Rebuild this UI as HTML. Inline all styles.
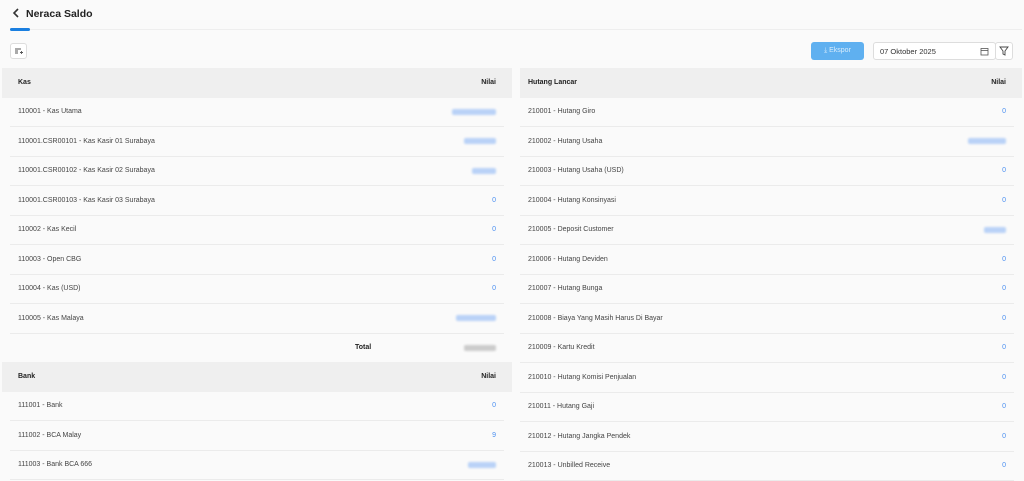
<!DOCTYPE html>
<html><head><style>
*{margin:0;padding:0;box-sizing:border-box}
body{width:1024px;height:481px;overflow:hidden;background:#fafafa;font-family:"Liberation Sans",sans-serif;font-size:8px;color:#333;position:relative}
.abs{position:absolute}
.tbl{position:absolute;top:68px}
.hd{height:29.5px;background:#efefef;display:flex;align-items:center;justify-content:space-between;padding:0 16px;font-weight:bold;font-size:7px;color:#222}
.row{height:29.5px;display:flex;align-items:center;justify-content:space-between;margin:0 8px;padding:0 8px;border-bottom:1px solid #ebebeb;font-size:7px;color:#444}
.r .hd{padding-left:8px}
.r .row{margin-left:0}
.v{color:#4a8ff0}
.b{display:inline-block;height:6px;background:#b9d2f7;border-radius:2px;filter:blur(1px)}
.g{background:#ccc}
</style></head><body>
<div class="abs" style="left:12px;top:8px;font-size:10.5px;font-weight:bold;color:#222">
<svg width="9" height="10" viewBox="0 0 9 10" style="vertical-align:-1px;margin-right:5px"><path d="M6 1L2 5l4 4" stroke="#333" stroke-width="1.6" fill="none"/></svg>Neraca Saldo</div>
<div class="abs" style="left:10px;top:29px;width:1012px;height:1px;background:#eee"></div>
<div class="abs" style="left:10px;top:28px;width:20px;height:3px;border-radius:2px;background:#1a7fe0"></div>
<div class="abs" style="left:10px;top:43px;width:17px;height:16px;border:1px solid #ddd;border-radius:3px;background:#fff">
<svg width="15" height="14" viewBox="0 0 15 14"><path d="M4 5h6M4 7h3M4 9h3M9 8.5h3M10.5 7v3" stroke="#555" stroke-width="0.9" fill="none"/></svg></div>
<div class="abs" style="left:811px;top:42px;width:53px;height:18px;background:#5fb0f0;border-radius:3px;color:#d8ecfc;font-size:7px;display:flex;align-items:center;justify-content:center">⤓&nbsp;Ekspor</div>
<div class="abs" style="left:873px;top:42px;width:123px;height:18px;border:1px solid #ddd;border-radius:3px;background:#fff;font-size:7.5px;padding:4px 6px;color:#333">07 Oktober 2025
<svg class="abs" style="right:6px;top:4px" width="9" height="9" viewBox="0 0 9 9"><rect x="1" y="1.5" width="7" height="6.5" stroke="#555" fill="none" stroke-width="0.8"/><path d="M1 3.5h7" stroke="#555" stroke-width="0.8"/></svg></div>
<div class="abs" style="left:995px;top:42px;width:18px;height:18px;border:1px solid #ddd;border-radius:3px;background:#fff">
<svg width="16" height="16" viewBox="0 0 16 16"><path d="M4 4h8l-3 4v4l-2-1V8z" stroke="#444" fill="none" stroke-width="0.9"/></svg></div>

<div class="tbl" style="left:2px;width:510px">
<div class="hd"><span>Kas</span><span>Nilai</span></div>
<div class="row"><span>110001 - Kas Utama</span><span class="b" style="width:44px"></span></div>
<div class="row"><span>110001.CSR00101 - Kas Kasir 01 Surabaya</span><span class="b" style="width:32px"></span></div>
<div class="row"><span>110001.CSR00102 - Kas Kasir 02 Surabaya</span><span class="b" style="width:24px"></span></div>
<div class="row"><span>110001.CSR00103 - Kas Kasir 03 Surabaya</span><span class="v">0</span></div>
<div class="row"><span>110002 - Kas Kecil</span><span class="v">0</span></div>
<div class="row"><span>110003 - Open CBG</span><span class="v">0</span></div>
<div class="row"><span>110004 - Kas (USD)</span><span class="v">0</span></div>
<div class="row"><span>110005 - Kas Malaya</span><span class="b" style="width:40px"></span></div>
<div class="row" style="font-weight:bold;color:#222"><span style="margin-left:337px">Total</span><span class="b g" style="width:32px"></span></div>
<div class="hd" style="margin-top:-1px"><span>Bank</span><span>Nilai</span></div>
<div class="row"><span>111001 - Bank</span><span class="v">0</span></div>
<div class="row"><span>111002 - BCA Malay</span><span class="v">9</span></div>
<div class="row"><span>111003 - Bank BCA 666</span><span class="b" style="width:28px"></span></div>
</div>

<div class="tbl r" style="left:520px;width:502px">
<div class="hd"><span>Hutang Lancar</span><span>Nilai</span></div>
<div class="row"><span>210001 - Hutang Giro</span><span class="v">0</span></div>
<div class="row"><span>210002 - Hutang Usaha</span><span class="b" style="width:38px"></span></div>
<div class="row"><span>210003 - Hutang Usaha (USD)</span><span class="v">0</span></div>
<div class="row"><span>210004 - Hutang Konsinyasi</span><span class="v">0</span></div>
<div class="row"><span>210005 - Deposit Customer</span><span class="b" style="width:22px"></span></div>
<div class="row"><span>210006 - Hutang Deviden</span><span class="v">0</span></div>
<div class="row"><span>210007 - Hutang Bunga</span><span class="v">0</span></div>
<div class="row"><span>210008 - Biaya Yang Masih Harus Di Bayar</span><span class="v">0</span></div>
<div class="row"><span>210009 - Kartu Kredit</span><span class="v">0</span></div>
<div class="row"><span>210010 - Hutang Komisi Penjualan</span><span class="v">0</span></div>
<div class="row"><span>210011 - Hutang Gaji</span><span class="v">0</span></div>
<div class="row"><span>210012 - Hutang Jangka Pendek</span><span class="v">0</span></div>
<div class="row"><span>210013 - Unbilled Receive</span><span class="v">0</span></div>
</div>
</body></html>
